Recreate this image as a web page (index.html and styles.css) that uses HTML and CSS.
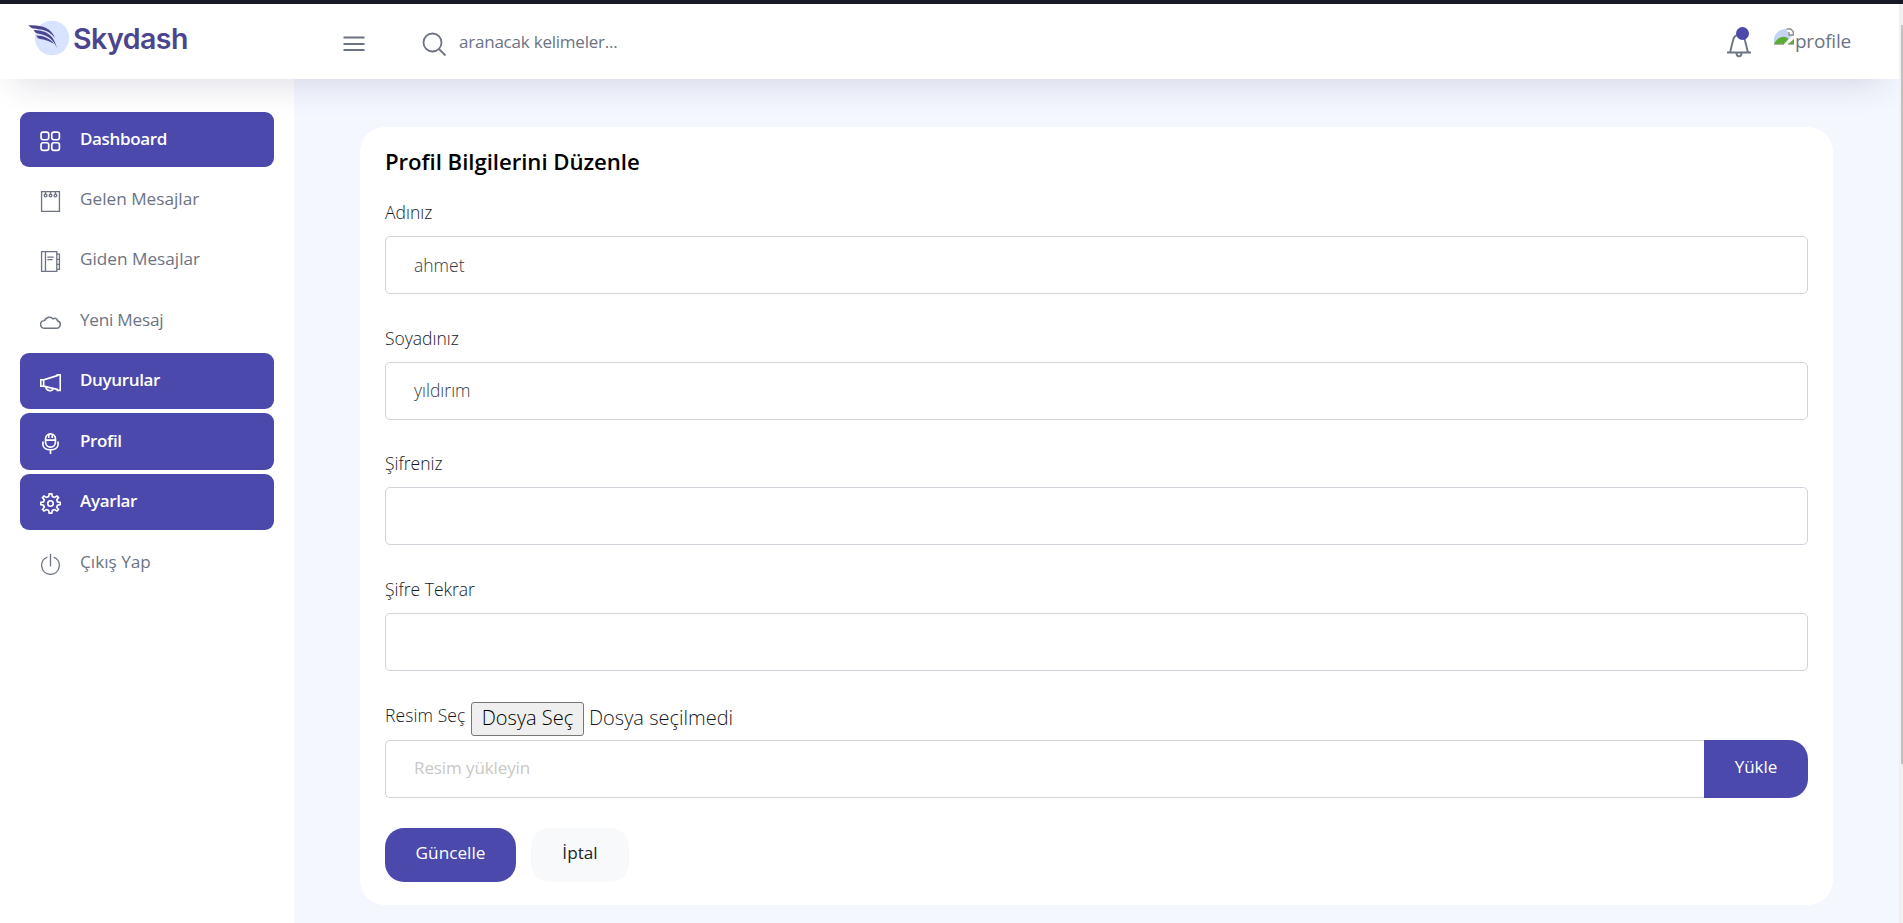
FILE: index.html
```html
<!DOCTYPE html>
<html lang="tr">
<head>
<meta charset="utf-8">
<title>Skydash</title>
<link rel="stylesheet" href="styles.css">
</head>
<body>
<div class="page">
  <header class="navbar">
    <div class="brand">
      <svg class="brand-mark" width="42" height="36" viewBox="0 0 42 36"><circle cx="24" cy="18" r="17.2" fill="#d8e3ff"/><g fill="#4b4590"><path d="M0 5.500C12 4.500 23 7.500 27 18C20 9 12 9.500 5 8.500C3 8 2 6.500 0 5.500Z"/><path d="M5.500 10C15 10.500 25 12 29 28C24 17 17 14.500 9.500 13.500C7.500 13 6.500 11.500 5.500 10Z"/><path d="M8 15.500C16 15.500 22 18.500 26 24C20 20.500 17 19.700 12 19C10 18.500 9 17 8 15.500Z"/></g></svg>
      <span class="brand-name">Skydash</span>
    </div>
    <svg class="burger" width="22" height="18" viewBox="0 0 22 18"><path d="M.5 2.500H21.500M.5 9H21.500M.5 15H21.500" stroke="#6c7383" stroke-width="1.900"/></svg>
    <div class="search">
      <svg width="25" height="25" viewBox="0 0 25 25" fill="none" stroke="#6c7383" stroke-width="1.800"><circle cx="10.500" cy="10.500" r="9"/><path d="M17 17L23.500 23.500"/></svg>
      <span>aranacak kelimeler...</span>
    </div>
    <div class="nav-right">
      <div class="bell">
        <svg width="24" height="26" viewBox="0 0 24 26" fill="none" stroke="#6c7383" stroke-width="1.900"><path d="M0 20.500H24M3 20.500L6 8.500C7.500 1 16.500 1 18 8.500L21 20.500M9.500 21C9.500 25.500 14.500 25.500 14.500 21"/></svg>
        <i class="dot"></i>
      </div>
      <div class="profile">
        <svg width="20" height="17" viewBox="0 0 20 17"><path d="M0 16V10C1 5 6 1 12 1L16 7L20 6L10 16Z" fill="#c3d4f5"/><path d="M0 16C4 8 11 7 14.500 11L10 16Z" fill="#5aad32"/><path d="M12.500 1H16.500L19.300 3.500V7H15V4" fill="#fff" stroke="#8e8e8e" stroke-width="1.400"/><path d="M14 16L20 11V16Z" fill="#5aad32"/><path d="M0 16.300H10M14 16.300H20" stroke="#999"/></svg>
        <span>profile</span>
      </div>
    </div>
  </header>
  <div class="body">
    <nav class="sidebar">
      <a class="item first active"><svg viewBox="0 0 20 20"><rect x="1" y="1" width="7.300" height="7.300" rx="2"/><rect x="11.200" y="1" width="7.300" height="7.300" rx="2"/><rect x="1" y="11.200" width="7.300" height="7.300" rx="2"/><rect x="11.200" y="11.200" width="7.300" height="7.300" rx="2"/></svg><span>Dashboard</span></a>
      <a class="item"><svg class="thin" viewBox="0 0 20 20"><path d="M1.500 .6H18.500V19.400H1.500Z"/><circle cx="5.300" cy="4.300" r="1.300"/><circle cx="10" cy="4.300" r="1.300"/><circle cx="14.700" cy="4.300" r="1.300"/><path d="M5.300 .6V3M10 .6V3M14.700 .6V3"/></svg><span>Gelen Mesajlar</span></a>
      <a class="item"><svg class="thin" viewBox="0 0 20 20"><path d="M1.500 .6H16V19.400H1.500ZM5.200 .6V19.400M7 5.800H13M7 8.300H12M16 3H18.500V17.500H16M16 8H18.500M16 12.800H18.500"/></svg><span>Giden Mesajlar</span></a>
      <a class="item"><svg class="cloud" viewBox="0 0 20 20"><path d="M4.500 15.500C-.8 15.300-.6 8.300 4.300 8.200C6 4.300 10.800 4.300 12.300 6.500C15 5.300 16.500 6.500 16.500 8.300C20.500 9 20.300 15.300 15.500 15.500Z"/></svg><span class="tight">Yeni Mesaj</span></a>
      <a class="item active"><svg viewBox="0 0 20 20"><path d="M.7 7.500H3.500L16.500 3.500V2.700H19.300V17.500H16.500V16.500L3.500 13.500H.7ZM3.500 7.500V13.500M5.500 14C6 18.800 12 18.800 12.500 15.700"/></svg><span>Duyurular</span></a>
      <a class="item active"><svg viewBox="0 0 20 20"><rect x="5.300" y=".8" width="9.400" height="12.700" rx="4.600"/><path d="M5.300 6.800H14.700M8.300 1V4.800M11.700 1V4.800M2.800 8.200V11C2.800 17.700 17.200 17.700 17.200 11V8.200M10 16V20"/></svg><span>Profil</span></a>
      <a class="item active"><svg viewBox="0 0 20 20"><circle cx="10" cy="10" r="2.600"/><path d="M8.800 .8H11.200L11.800 3.400L13.800 4.200L16.200 2.900L17.600 4.400L15.900 6.600L16.700 8.500L19.300 9V11L16.700 11.600L15.900 13.500L17.600 15.700L16.200 17.200L13.800 15.800L11.800 16.600L11.200 19.200H8.800L8.200 16.600L6.200 15.800L3.800 17.200L2.400 15.700L4.100 13.500L3.300 11.600L.7 11V9L3.300 8.500L4.100 6.600L2.400 4.400L3.800 2.900L6.200 4.200L8.200 3.400Z"/></svg><span>Ayarlar</span></a>
      <a class="item"><svg class="thin" viewBox="0 0 20 20"><path d="M7 2.900C-1.500 6 .5 19.400 10 19.400S21.500 6 13 2.900M10 0V12"/></svg><span>Çıkış Yap</span></a>
    </nav>
    <main class="content">
      <section class="card">
        <h1>Profil Bilgilerini Düzenle</h1>
        <div class="group"><label>Adınız</label><div class="field">ahmet</div></div>
        <div class="group"><label>Soyadınız</label><div class="field">yıldırım</div></div>
        <div class="group"><label>Şifreniz</label><div class="field"></div></div>
        <div class="group"><label>Şifre Tekrar</label><div class="field"></div></div>
        <div class="group upload">
          <div class="file-row"><label>Resim Seç</label><button class="file-btn">Dosya Seç</button><span class="file-none">Dosya seçilmedi</span></div>
          <div class="input-group"><div class="field placeholder">Resim yükleyin</div><button class="btn btn-upload">Yükle</button></div>
        </div>
        <div class="actions"><button class="btn btn-primary">Güncelle</button><button class="btn btn-light">İptal</button></div>
      </section>
    </main>
  </div>
  <div class="scrollbar"><i></i></div>
</div>
</body>
</html>
```
FILE: styles.css
```css
* { box-sizing: border-box; }
html, body { margin: 0; height: 100%; overflow: hidden; }
body { font: 350 17.5px/24px "Open Sans", "Noto Sans", sans-serif; color: #16191c; background: #f5f7ff; }
.page { height: 923px; display: flex; flex-direction: column; position: relative; border-top: 4px solid #171926; }
.navbar { height: 75px; width: 1899px; flex: none; display: flex; align-items: flex-start; background: #fff; color: #6c7383; box-shadow: 0 19px 34px -15px rgba(30, 30, 80, .16); position: relative; z-index: 2; }
.brand { width: 315px; height: 60px; padding: 16px 0 0 28px; display: flex; align-items: flex-start; }
.brand-mark { flex: none; }
.brand-name { margin: 1px 0 0 3px; font: 600 28.500px/36px Inter, sans-serif; letter-spacing: -.5px; color: #4b4590; }
.burger { margin: 31px 0 0 28px; }
.search { display: flex; margin: 28px 0 0 57px; }
.search span { margin: -2.500px 0 0 12px; font-weight: 400; font-size: 17px; letter-spacing: -.22px; }
.nav-right { display: flex; margin-left: auto; }
.bell { position: relative; margin: 28px 23px 0 0; height: 26px; }
.dot { position: absolute; left: 9px; top: -5px; width: 13px; height: 13px; border-radius: 50%; background: #4b49ac; }
.profile { display: flex; margin: 24px 48px 0 0; font-size: 19px; font-weight: 400; letter-spacing: -.2px; }
.profile span { margin: 1px 0 0 1px; }
.body { flex: 1; display: flex; width: 1899px; }
.sidebar { width: 294px; background: #fff; padding: 33px 20px 0; }
.item { display: flex; align-items: center; height: 56.500px; margin-bottom: 4px; padding-left: 20px; border-radius: 9px; color: #6c7383; font-weight: 430; font-size: 17.200px; }
.item.first { height: 55px; }
.item svg { width: 21px; height: 21px; margin: 4px 19px 0 0; fill: none; stroke: currentColor; stroke-width: 1.600; flex: none; }
.item .thin { stroke-width: 1.250; }
.item .cloud { stroke-width: 1.400; }
.item span { margin-top: -1.500px; }
.item .tight { letter-spacing: -.25px; }
.item.active { background: #4b49ac; color: #fff; font-weight: 580; font-size: 17px; letter-spacing: -.35px; }
.content { flex: 1; padding: 48px 66px 0; }
.card { height: 778px; background: #fff; border-radius: 25px; padding: 21px 25px 0; }
h1 { margin: 0 0 24px; font: 600 22.200px/28px "Open Sans", sans-serif; letter-spacing: -.05px; color: #010101; }
.group { height: 125.700px; }
label { display: block; height: 36px; line-height: 24px; }
.field { height: 58px; border: 1px solid #ced4da; border-radius: 5px; padding: 15.500px 28px; line-height: 24px; color: #343c44; }
.upload { height: 126px; margin-top: -1px; }
.file-row { display: flex; align-items: flex-start; height: 38px; }
.file-btn { margin-left: 5px; width: 113px; height: 34px; padding: 0 0 1px; border: 1px solid #767676; border-radius: 3px; background: #efefef; color: #000; font: 350 20px/28px "Open Sans", sans-serif; }
.file-row label { width: 81px; white-space: nowrap; letter-spacing: .1px; line-height: 27px; }
.file-none { margin: 2px 0 0 5px; font-size: 20px; line-height: 28px; }
.input-group { display: flex; }
.input-group .field { flex: 1; border-radius: 5px 0 0 5px; border-right: 0; }
.input-group .placeholder { color: #c9c8c8; font-weight: 400; font-size: 17px; letter-spacing: -.1px; }
.btn { border: 0; border-radius: 19px; padding: 0 0 3px; font: 430 17.200px/24px "Open Sans", sans-serif; color: #fff; background: #4b49ac; }
.btn-upload { width: 104px; height: 58px; border-radius: 0 19px 19px 0; font-size: 17px; }
.actions { display: flex; gap: 15px; }
.actions .btn { height: 54px; }
.btn-primary { width: 131px; }
.actions .btn-light { width: 98px; background: #f8f9fa; color: #212529; }
.scrollbar { position: absolute; right: 0; top: 0; width: 4px; height: 919px; background: #f1f1f1; z-index: 3; }
.scrollbar i { position: absolute; left: 2px; top: 21px; width: 2px; height: 739px; background: #c1c1c1; }
```
